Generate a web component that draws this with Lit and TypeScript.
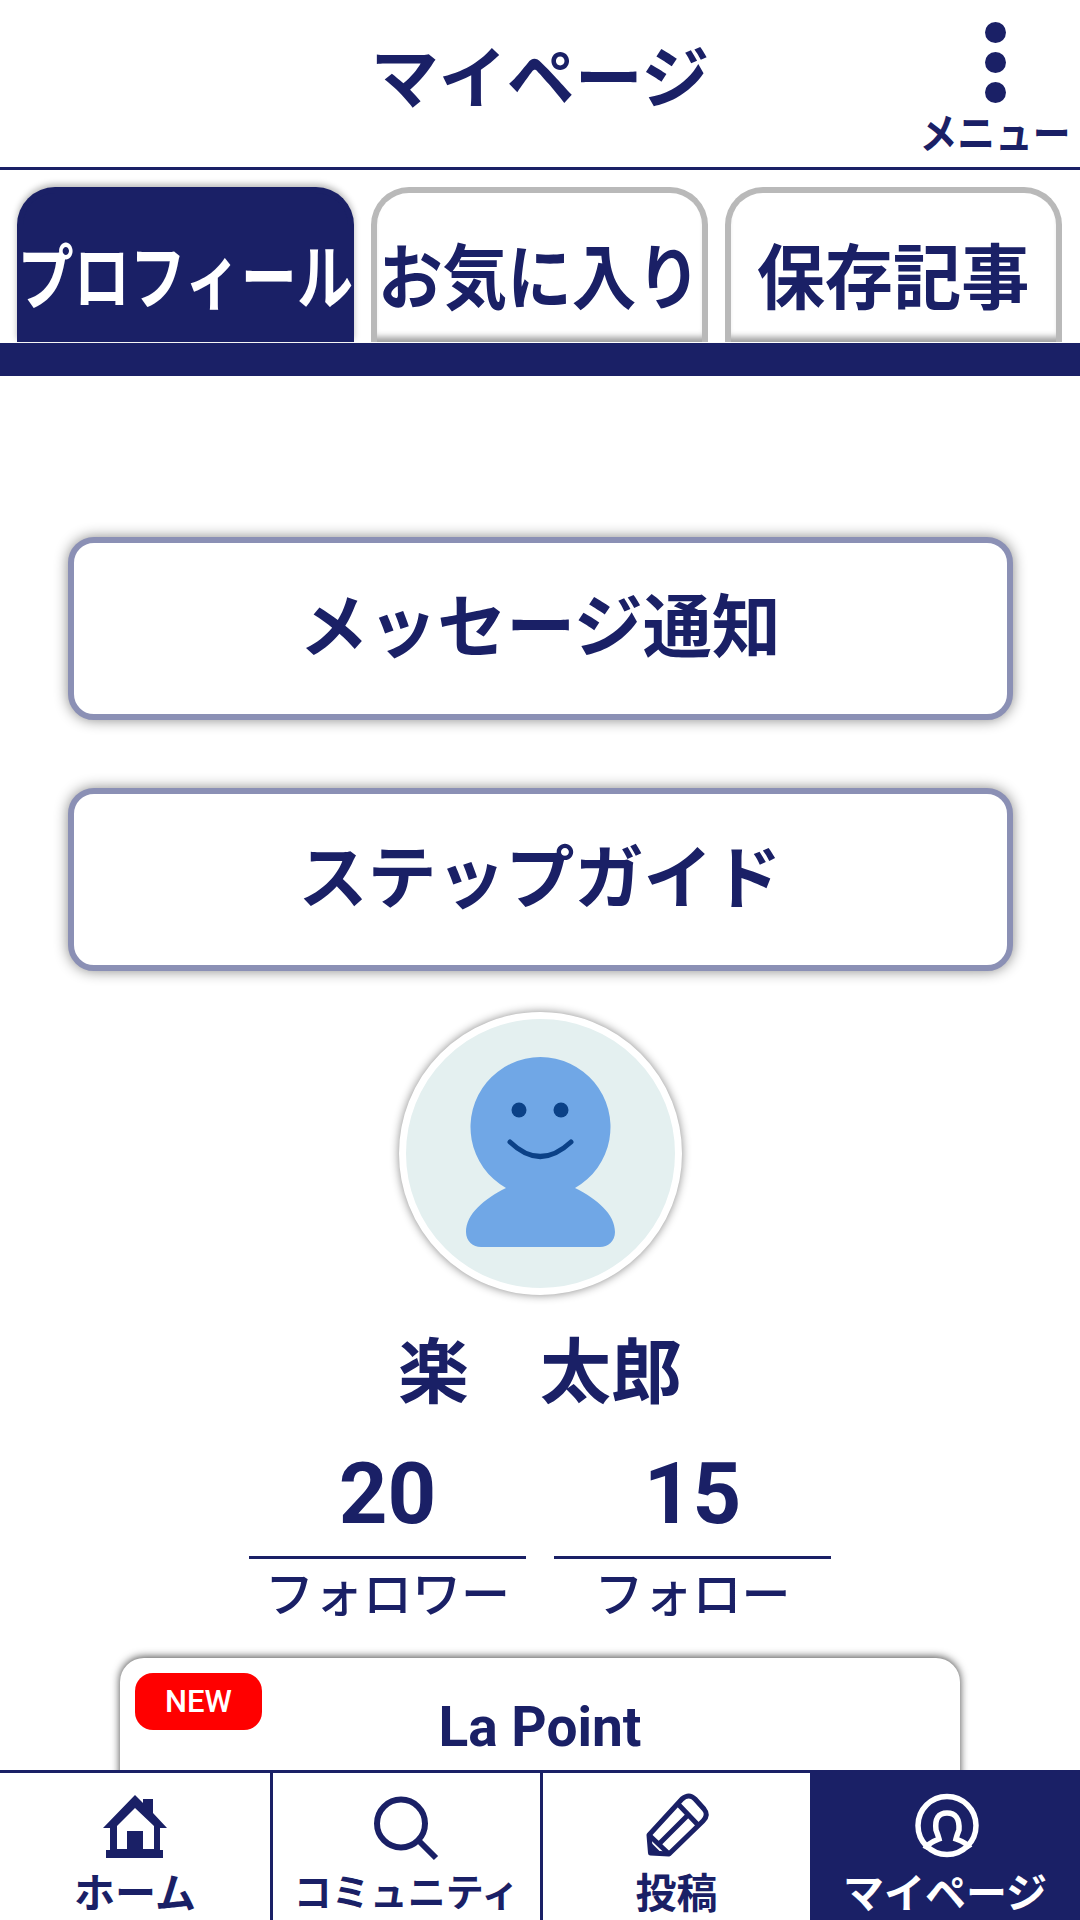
import { LitElement, css, html } from 'lit';
import { customElement } from 'lit/decorators.js';

const tabs = [
  { label: 'プロフィール', scale: 0.79, active: true },
  { label: 'お気に入り', scale: 0.91, active: false },
  { label: '保存記事', scale: 0.96, active: false },
];

const homeIcon = html`<svg viewBox="0 0 90 80" width="90" height="80">
  <path fill-rule="evenodd" d="M45 10 L53 18 V14 H63 V28 L77 43 H70 V65 H73 V73 H16 V65 H20 V43 H13 Z M45 23 L27 41 V64 H37 V46 H53 V64 H64 V41 Z" fill="currentColor" />
</svg>`;

const searchIcon = html`<svg viewBox="0 0 90 80" width="90" height="80" fill="none" stroke="currentColor" stroke-width="6">
  <circle cx="39" cy="38.5" r="24" />
  <path d="M57 56 L74 73" />
</svg>`;

const pencilIcon = html`<svg viewBox="0 0 90 80" width="90" height="80" fill="none" stroke="currentColor" stroke-width="5" stroke-linejoin="round">
  <path d="M18.5 68 L17 50 L50 14 Q57 8 63 14 L72 24 Q77 30 71 36 L37 69 Z" />
  <path d="M17 50 L37 69 M46 19 L67 41 M27 59 L57 29 M18 60 L26 68" />
</svg>`;

const userIcon = html`<svg viewBox="0 0 90 80" width="90" height="80" fill="none" stroke="currentColor" stroke-width="5.5">
  <circle cx="47" cy="38.5" r="29" />
  <path d="M25 62 Q28 56 39 52 Q38 48 36 43 Q34 26 47 26 Q60 26 59 43 Q57 48 56 52 Q67 56 70 61" />
</svg>`;

const navItems = [
  { label: 'ホーム', icon: homeIcon, iconClass: 'home', active: false },
  { label: 'コミュニティ', icon: searchIcon, iconClass: 'search', active: false },
  { label: '投稿', icon: pencilIcon, iconClass: 'pencil', active: false },
  { label: 'マイページ', icon: userIcon, iconClass: 'user', active: true },
];

@customElement('app-root')
export class AppRoot extends LitElement {
  override render() {
    return html`
      <div class="page">
        <header class="header">
          <h1 class="title">マイページ</h1>
          <div class="menu">
            <span class="dot"></span>
            <span class="dot"></span>
            <span class="dot"></span>
            <span class="menu-label">メニュー</span>
          </div>
        </header>

        <nav class="tabs">
          ${tabs.map(
            (t) => html`
              <div class="tab ${t.active ? 'active' : ''}">
                <span class="tab-label" style="transform: scaleX(${t.scale})">${t.label}</span>
              </div>
            `,
          )}
        </nav>
        <div class="band"></div>

        <main class="main">
          <button class="big-button" type="button">メッセージ通知</button>
          <button class="big-button second" type="button">ステップガイド</button>

          <div class="avatar">
            <svg viewBox="0 0 269 269" width="269" height="269">
              <path
                d="M100 169 A70 70 0 1 1 169 169 C191 180 209 195 209 213 C209 222 202 228 194 228 H75 C67 228 60 222 60 213 C60 195 78 180 100 169 Z"
                fill="#70a7e6"
              />
              <circle cx="113" cy="91" r="7.5" fill="#0b4187" />
              <circle cx="155" cy="91" r="7.5" fill="#0b4187" />
              <path d="M104 123 Q134 152 165 123" fill="none" stroke="#0b4187" stroke-width="5" stroke-linecap="round" />
            </svg>
          </div>

          <div class="name">楽　太郎</div>

          <div class="stats">
            <div class="stat">
              <div class="stat-num">20</div>
              <div class="stat-label">フォロワー</div>
            </div>
            <div class="stat">
              <div class="stat-num">15</div>
              <div class="stat-label">フォロー</div>
            </div>
          </div>

          <section class="card">
            <span class="badge">NEW</span>
            <div class="card-title">La Point</div>
          </section>
        </main>

        <footer class="bottom-nav">
          ${navItems.map(
            (n) => html`
              <div class="nav-item ${n.active ? 'active' : ''}">
                <span class="nav-icon ${n.iconClass}">${n.icon}</span>
                <span class="nav-label">${n.label}</span>
              </div>
            `,
          )}
        </footer>
      </div>
    `;
  }

  static override styles = css`
    :host {
      display: block;
      --navy: #1a2066;
      font-family: 'Noto Sans CJK JP', 'Noto Sans', sans-serif;
      color: var(--navy);
    }

    .page {
      display: flex;
      flex-direction: column;
      width: 1080px;
      height: 1920px;
      overflow: hidden;
      background: #fff;
    }

    .header {
      position: relative;
      flex: none;
      display: flex;
      justify-content: flex-end;
      height: 167px;
      border-bottom: 3px solid var(--navy);
      box-sizing: content-box;
    }

    .title {
      position: absolute;
      left: 0;
      right: 0;
      top: 26px;
      margin: 0;
      text-align: center;
      font-size: 68px;
      line-height: 96px;
      font-weight: 700;
    }

    .menu {
      display: flex;
      flex-direction: column;
      align-items: center;
      gap: 9px;
      width: 160px;
      margin-right: 5px;
      padding-top: 22px;
    }

    .dot {
      flex: none;
      width: 21px;
      height: 21px;
      border-radius: 50%;
      background: var(--navy);
    }

    .menu-label {
      margin-top: -3px;
      font-size: 42px;
      line-height: 44px;
      font-weight: 700;
      white-space: nowrap;
      transform: scaleX(0.9);
    }

    .tabs {
      flex: none;
      display: flex;
      gap: 17px;
      height: 155px;
      padding: 17px 18px 1px 17px;
    }

    .tab {
      flex: 1 1 0;
      min-width: 0;
      display: flex;
      align-items: center;
      justify-content: center;
      box-sizing: border-box;
      height: 155px;
      border: 6px solid #b9b9b9;
      border-bottom: 0;
      border-radius: 38px 38px 0 0;
      background: #fff;
      box-shadow: inset 0 -9px 6px -4px #a0a0a0;
    }

    .tab.active {
      border-color: var(--navy);
      background: var(--navy);
      color: #fff;
      box-shadow: 0 -3px 6px #bbb;
    }

    .tab-label {
      flex: none;
      display: block;
      margin-top: 8px;
      font-size: 71px;
      line-height: 80px;
      font-weight: 700;
      white-space: nowrap;
    }

    .band {
      flex: none;
      height: 33px;
      background: var(--navy);
    }

    .main {
      flex: 1;
      min-height: 0;
      display: flex;
      flex-direction: column;
      align-items: center;
      overflow: hidden;
    }

    .big-button {
      flex: none;
      box-sizing: border-box;
      width: 945px;
      height: 183px;
      margin-top: 161px;
      border: 6px solid #8b90b5;
      border-radius: 26px;
      background: #fff;
      box-shadow: 0 0 14px #888;
      color: var(--navy);
      font: inherit;
      font-size: 69px;
      font-weight: 700;
      line-height: 1;
      padding: 0 0 12px;
    }

    .big-button.second {
      margin-top: 68px;
    }

    .avatar {
      flex: none;
      display: flex;
      align-items: center;
      justify-content: center;
      box-sizing: border-box;
      width: 283px;
      height: 283px;
      margin-top: 41px;
      border: 7px solid #fff;
      border-radius: 50%;
      background: #e4f0f0;
      box-shadow: 0 0 10px #888;
    }

    .name {
      flex: none;
      margin-top: 31px;
      font-size: 71px;
      line-height: 80px;
      font-weight: 700;
    }

    .stats {
      flex: none;
      display: flex;
      gap: 28px;
      margin-top: 38px;
    }

    .stat {
      width: 277px;
      text-align: center;
    }

    .stat-num {
      height: 112px;
      border-bottom: 3px solid var(--navy);
      font-family: Roboto, sans-serif;
      font-size: 85px;
      line-height: 100px;
      font-weight: 700;
    }

    .stat-label {
      margin-top: -1px;
      font-size: 49px;
      line-height: 66px;
      font-weight: 500;
    }

    .card {
      position: relative;
      flex: none;
      box-sizing: border-box;
      width: 840px;
      height: 240px;
      margin-top: 34px;
      border-radius: 24px;
      background: #fff;
      box-shadow: 0 -1px 9px #444;
      text-align: center;
    }

    .badge {
      position: absolute;
      left: 15px;
      top: 15px;
      width: 127px;
      height: 57px;
      border-radius: 18px;
      background: #f00;
      color: #fff;
      font-family: Roboto, sans-serif;
      font-size: 31px;
      line-height: 57px;
      font-weight: 500;
    }

    .card-title {
      padding-top: 35px;
      font-family: Roboto, sans-serif;
      font-size: 55px;
      line-height: 68px;
      font-weight: 700;
    }

    .bottom-nav {
      flex: none;
      display: grid;
      grid-template-columns: 273px 270px 267px 270px;
      height: 147px;
      border-top: 3px solid var(--navy);
      background: #fff;
      position: relative;
    }

    .nav-item {
      display: flex;
      flex-direction: column;
      align-items: center;
      box-sizing: border-box;
      border-right: 3px solid var(--navy);
      overflow: hidden;
    }

    .nav-item:nth-child(3) {
      border-right: 0;
    }

    .nav-item.active {
      margin-top: -3px;
      border-right: 0;
      padding-top: 3px;
      background: var(--navy);
      color: #fff;
    }

    .nav-icon {
      display: block;
      height: 80px;
      margin-top: 12px;
    }

    .nav-item.active .nav-icon {
      margin-top: 14px;
    }

    .nav-icon svg {
      display: block;
    }

    .nav-label {
      margin-top: -3px;
      font-size: 41px;
      line-height: 56px;
      font-weight: 700;
      white-space: nowrap;
    }

    .nav-item.active .nav-label {
      margin-top: -5px;
    }

    .nav-item:nth-child(2) .nav-label {
      font-size: 38px;
    }
  `;
}
